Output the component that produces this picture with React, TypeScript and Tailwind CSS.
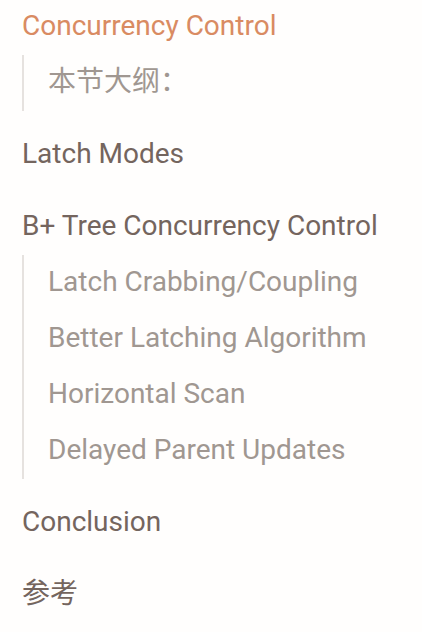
export default function App() {
  const font = { fontFamily: 'Roboto, "Noto Sans CJK SC", sans-serif' };
  const Heading = ({ text, active }: { text: string; active?: boolean }) => (
    <div className={`h-14 pb-[3px] flex items-center text-[28px] ${active ? "text-[#d98b62]" : "text-[#74655e]"}`}>{text}</div>
  );
  const Sub = ({ items }: { items: string[] }) => (
    <div className="border-l-2 border-[#e6e2df] pl-6">
      {items.map((t) => (
        <div key={t} className="h-14 pb-[2px] flex items-center text-[28px] text-[#a09791]">{t}</div>
      ))}
    </div>
  );
  return (
    <div className="w-[422px] h-[632px] bg-[#fffefd] pl-[22px] overflow-hidden" style={font}>
      <div className="flex flex-col gap-4 -mt-px">
        <div>
          <Heading text="Concurrency Control" active />
          <Sub items={["本节大纲："]} />
        </div>
        <Heading text="Latch Modes" />
        <div>
          <Heading text="B+ Tree Concurrency Control" />
          <Sub items={["Latch Crabbing/Coupling", "Better Latching Algorithm", "Horizontal Scan", "Delayed Parent Updates"]} />
        </div>
        <Heading text="Conclusion" />
        <Heading text="参考" />
      </div>
    </div>
  );
}
